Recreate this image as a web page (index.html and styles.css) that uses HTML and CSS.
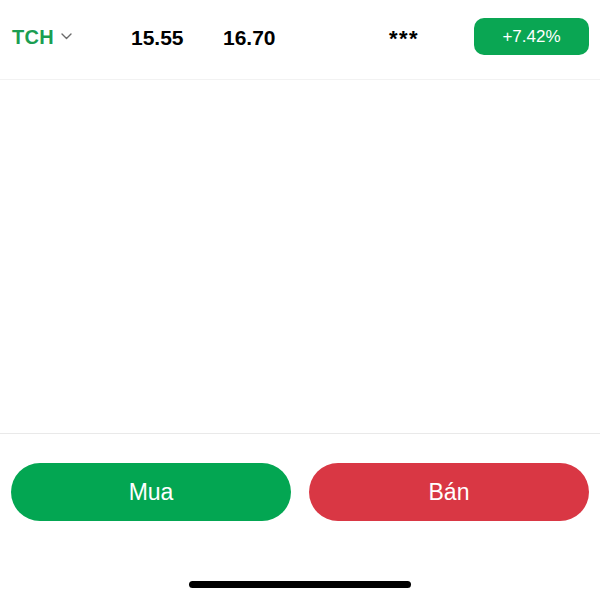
FILE: index.html
```html
<!DOCTYPE html>
<html lang="vi">
<head>
<meta charset="utf-8">
<link rel="stylesheet" href="styles.css">
</head>
<body>
<div class="screen">
  <header class="quote">
    <div class="symbol">
      <span class="ticker">TCH</span>
      <svg class="chev" width="11" height="7" viewBox="0 0 11 7"><path d="M1 1 L5.5 5.5 L10 1" fill="none" stroke="#6b6b6b" stroke-width="1.4" stroke-linecap="round" stroke-linejoin="round"/></svg>
    </div>
    <div class="price">15.55</div>
    <div class="price">16.70</div>
    <div class="mask">***</div>
    <div class="badge">+7.42%</div>
  </header>
  <main class="chart"></main>
  <section class="actions">
    <button class="btn buy">Mua</button>
    <button class="btn sell">Bán</button>
  </section>
  <div class="home-area"><div class="home-bar"></div></div>
</div>
</body>
</html>
```
FILE: styles.css
```css
* { box-sizing: border-box; }
html, body { margin: 0; padding: 0; background: #fff; }
body { font-family: "Liberation Sans", Arial, sans-serif; color: #000; }
.screen { width: 600px; height: 600px; display: flex; flex-direction: column; }
.quote {
  height: 80px;
  border-bottom: 1px solid #f2f2f2;
  display: grid;
  grid-template-columns: 119px 92px 166px 85px 115px;
  align-items: center;
  padding: 0 11px 6px 12px;
}
.symbol { display: flex; align-items: center; gap: 7px; padding-top: 2px; }
.ticker { color: #1b9e52; font-weight: 700; font-size: 20px; letter-spacing: 0.3px; }
.chev { margin-top: -2px; }
.price { font-weight: 700; font-size: 21px; padding-top: 2px; }
.mask { font-weight: 700; font-size: 22px; letter-spacing: 1.5px; padding-top: 5px; }
.badge {
  height: 37px;
  border-radius: 10px;
  background: #0aa653;
  color: #fff;
  font-size: 17px;
  display: flex; align-items: center; justify-content: center;
}
.chart { height: 354px; border-bottom: 1px solid #e9e9e9; }
.actions { display: flex; gap: 18px; padding: 29px 11px 0; }
.btn {
  flex: 1;
  height: 58px;
  border: 0;
  border-radius: 29px;
  color: #fff;
  font-family: "Liberation Sans", Arial, sans-serif;
  font-size: 23px;
  padding: 0;
}
.buy { background: #03a652; }
.sell { background: #d93744; }
.home-area { flex: 1; display: flex; justify-content: center; padding-top: 60px; }
.home-bar { width: 222px; height: 7px; border-radius: 4px; background: #000; }
```
